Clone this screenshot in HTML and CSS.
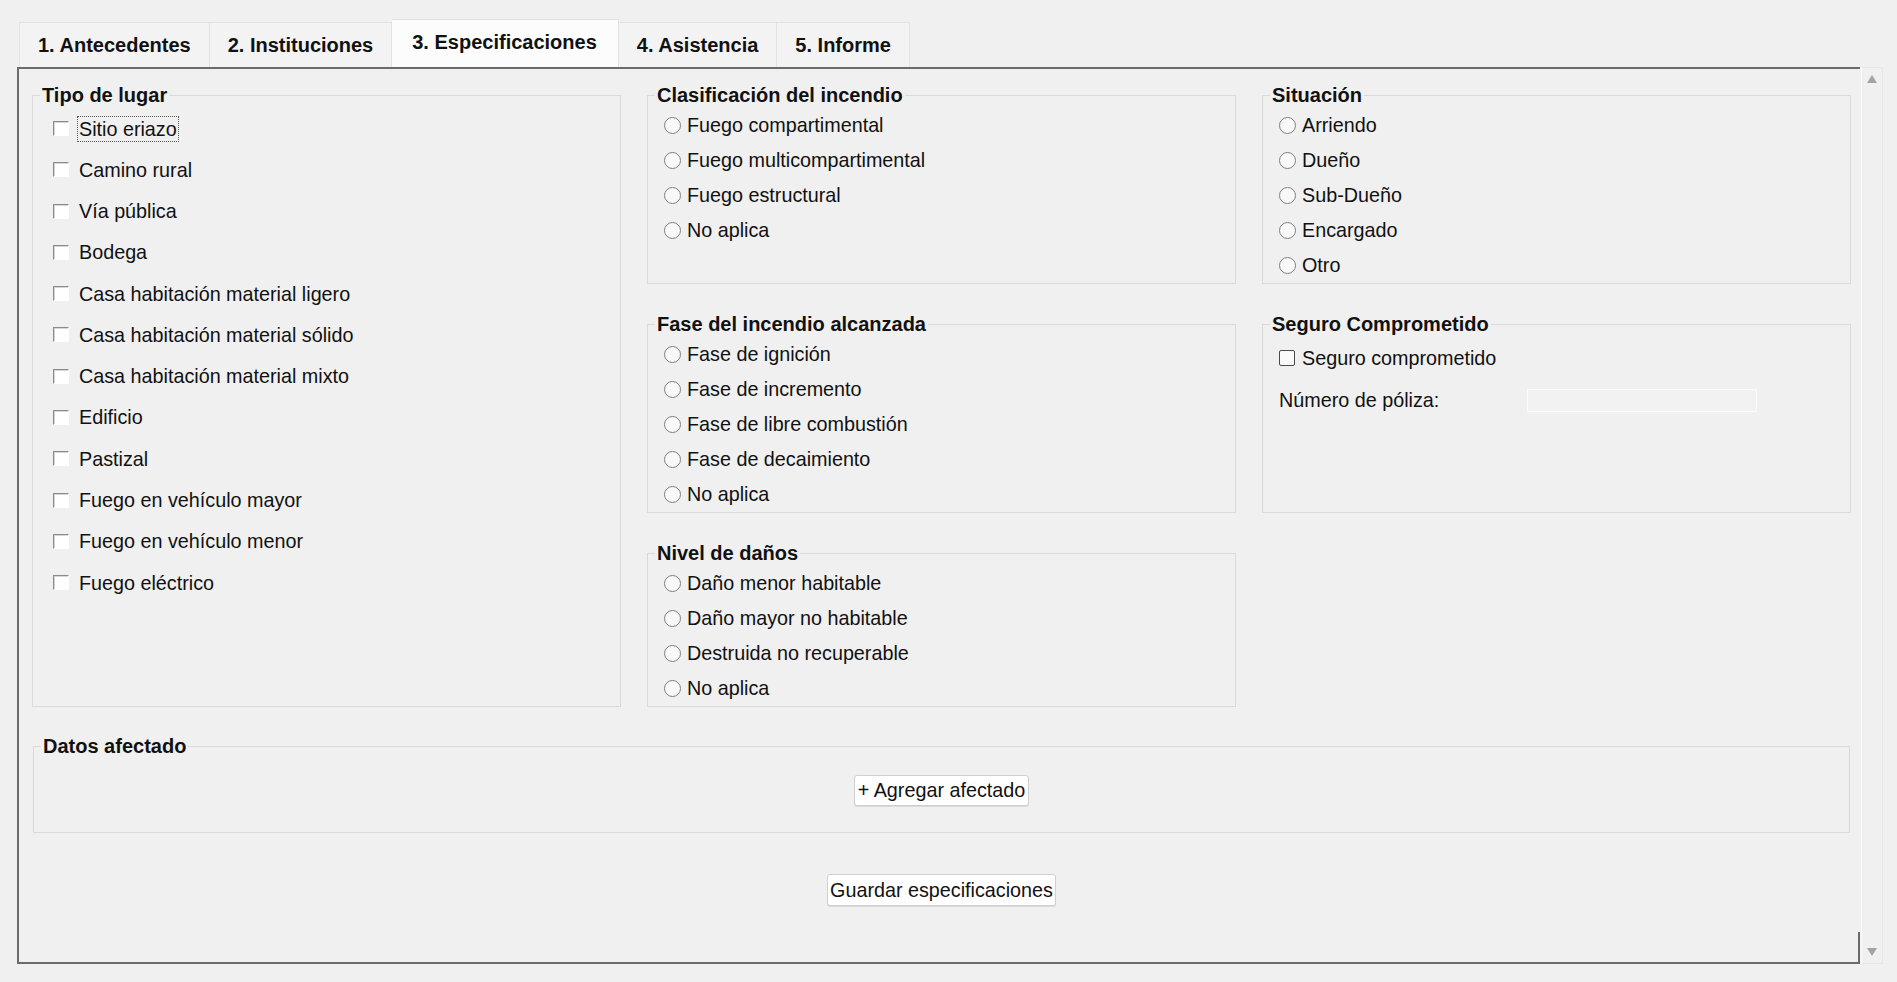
FILE: index.html
```html
<!DOCTYPE html>
<html lang="es">
<head>
    <meta charset="UTF-8">
    <meta name="viewport" content="width=device-width, initial-scale=1.0">
    <title>Especificaciones del incendio</title>
    <link rel="stylesheet" href="styles.css">
</head>
<body>

    <div class="tabs">
        <div class="tab">1. Antecedentes</div>
        <div class="tab">2. Instituciones</div>
        <div class="tab active">3. Especificaciones</div>
        <div class="tab">4. Asistencia</div>
        <div class="tab">5. Informe</div>
    </div>

    <div class="viewport">
        <div class="panel">
            <div class="grid">

                <fieldset class="group tipo">
                    <legend>Tipo de lugar</legend>
                    <div class="checks">
                        <label class="check"><input type="checkbox"><span class="focus">Sitio eriazo</span></label>
                        <label class="check"><input type="checkbox"><span>Camino rural</span></label>
                        <label class="check"><input type="checkbox"><span>Vía pública</span></label>
                        <label class="check"><input type="checkbox"><span>Bodega</span></label>
                        <label class="check"><input type="checkbox"><span>Casa habitación material ligero</span></label>
                        <label class="check"><input type="checkbox"><span>Casa habitación material sólido</span></label>
                        <label class="check"><input type="checkbox"><span>Casa habitación material mixto</span></label>
                        <label class="check"><input type="checkbox"><span>Edificio</span></label>
                        <label class="check"><input type="checkbox"><span>Pastizal</span></label>
                        <label class="check"><input type="checkbox"><span>Fuego en vehículo mayor</span></label>
                        <label class="check"><input type="checkbox"><span>Fuego en vehículo menor</span></label>
                        <label class="check"><input type="checkbox"><span>Fuego eléctrico</span></label>
                    </div>
                </fieldset>

                <fieldset class="group">
                    <legend>Clasificación del incendio</legend>
                    <div class="radios">
                        <label class="radio"><input type="radio" name="clasificacion">Fuego compartimental</label>
                        <label class="radio"><input type="radio" name="clasificacion">Fuego multicompartimental</label>
                        <label class="radio"><input type="radio" name="clasificacion">Fuego estructural</label>
                        <label class="radio"><input type="radio" name="clasificacion">No aplica</label>
                    </div>
                </fieldset>

                <fieldset class="group">
                    <legend>Situación</legend>
                    <div class="radios">
                        <label class="radio"><input type="radio" name="situacion">Arriendo</label>
                        <label class="radio"><input type="radio" name="situacion">Dueño</label>
                        <label class="radio"><input type="radio" name="situacion">Sub-Dueño</label>
                        <label class="radio"><input type="radio" name="situacion">Encargado</label>
                        <label class="radio"><input type="radio" name="situacion">Otro</label>
                    </div>
                </fieldset>

                <fieldset class="group">
                    <legend>Fase del incendio alcanzada</legend>
                    <div class="radios">
                        <label class="radio"><input type="radio" name="fase">Fase de ignición</label>
                        <label class="radio"><input type="radio" name="fase">Fase de incremento</label>
                        <label class="radio"><input type="radio" name="fase">Fase de libre combustión</label>
                        <label class="radio"><input type="radio" name="fase">Fase de decaimiento</label>
                        <label class="radio"><input type="radio" name="fase">No aplica</label>
                    </div>
                </fieldset>

                <fieldset class="group">
                    <legend>Seguro Comprometido</legend>
                    <label class="seguro-row"><input type="checkbox" class="flat">Seguro comprometido</label>
                    <div class="seguro-row poliza">
                        <label for="poliza">Número de póliza:</label>
                        <input type="text" id="poliza" disabled>
                    </div>
                </fieldset>

                <fieldset class="group">
                    <legend>Nivel de daños</legend>
                    <div class="radios">
                        <label class="radio"><input type="radio" name="danos">Daño menor habitable</label>
                        <label class="radio"><input type="radio" name="danos">Daño mayor no habitable</label>
                        <label class="radio"><input type="radio" name="danos">Destruida no recuperable</label>
                        <label class="radio"><input type="radio" name="danos">No aplica</label>
                    </div>
                </fieldset>

            </div>

            <fieldset class="group datos">
                <legend>Datos afectado</legend>
                <div class="actions">
                    <button type="button">+ Agregar afectado</button>
                </div>
            </fieldset>

            <button type="button" class="save">Guardar especificaciones</button>
        </div>

        <div class="scrollbar">
            <svg width="10" height="8" viewBox="0 0 10 8"><polygon points="5,0 10,8 0,8" fill="#a3a3a3"/></svg>
            <svg width="10" height="8" viewBox="0 0 10 8"><polygon points="0,0 10,0 5,8" fill="#a3a3a3"/></svg>
        </div>
    </div>

</body>
</html>
```

FILE: styles.css
```css
body {
    margin: 0;
    background: #f0f0f0;
    font-family: "Liberation Sans", Arial, sans-serif;
    font-size: 19.75px;
    color: #111;
}

/* tab strip */
.tabs {
    display: flex;
    align-items: flex-end;
    height: 48px;
    padding: 19px 0 0 19px;
}
.tab {
    height: 44px;
    line-height: 44px;
    padding: 0 18px;
    font-size: 20px;
    font-weight: bold;
    background: #f3f3f3;
    border: 1px solid #e2e2e2;
    border-left: none;
    border-bottom: none;
}
.tab:first-child {
    border-left: 1px solid #e2e2e2;
}
.tab.active {
    padding: 0 21px 3px 20px;
    background: #fcfcfc;
}

/* scroll pane */
.viewport {
    display: flex;
    height: 897px;
    margin: 0 14px 0 17px;
}
.panel {
    flex: 1;
    position: relative;
    box-sizing: border-box;
    border: 2px solid #6b6b6b;
    border-right: none;
    padding: 14px 9px 0 13px;
}
.panel::after {
    content: "";
    position: absolute;
    right: 0;
    bottom: -2px;
    width: 2px;
    height: 32px;
    background: #6b6b6b;
}
.scrollbar {
    width: 22px;
    margin-left: 1px;
    box-sizing: border-box;
    border: 1px solid #e6e6e6;
    border-left-color: #fbfbfb;
    padding: 7px 0;
    display: flex;
    flex-direction: column;
    justify-content: space-between;
    align-items: center;
}

/* groups */
.grid {
    display: grid;
    grid-template-columns: repeat(3, 1fr);
    column-gap: 26px;
    row-gap: 28px;
}
.tipo {
    grid-row: span 3;
}
.group {
    margin: 0;
    padding: 1px 0 0;
    min-width: 0;
    border: 1px solid #dadada;
}
.group legend {
    margin-left: 7px;
    padding: 0 2px;
    font-size: 20px;
    font-weight: bold;
    line-height: 24px;
}

.checks {
    padding-left: 20px;
}
.check {
    display: flex;
    align-items: center;
    height: 41.27px;
}
.check input {
    appearance: none;
    width: 16px;
    height: 15px;
    margin: 0 8px 0 0;
    border: 1px solid;
    border-color: #8a8a8a #fff #fff #8a8a8a;
    background: #fff;
    box-shadow: inset 1px 1px 0 #d6d6d6;
}
.check span {
    line-height: 24px;
    padding: 0 1px;
    border: 1px dotted transparent;
}
.check span.focus {
    border-color: #555;
}

.radios {
    padding-left: 16px;
}
.radio {
    display: flex;
    align-items: center;
    height: 35px;
}
.radio input {
    appearance: none;
    width: 17px;
    height: 17px;
    margin: 0 6px 0 0;
    border: 1px solid #7e7e7e;
    border-radius: 50%;
    background: #f8f8f8;
}

.seguro-row {
    display: flex;
    align-items: center;
    height: 42px;
    padding-left: 16px;
}
.seguro-row input.flat {
    appearance: none;
    width: 16px;
    height: 16px;
    margin: 0 7px 0 0;
    border: 1px solid #4a4a4a;
    border-radius: 2px;
    background: #fafafa;
}
.poliza label {
    width: 248px;
}
.poliza input {
    width: 230px;
    height: 23px;
    box-sizing: border-box;
    margin: 0;
    border: 1px solid #fbfbfb;
    background: #f2f2f2;
}

.datos {
    margin: 27px 1px 0;
    padding: 17px 0 26px;
}
.actions {
    text-align: center;
}

button {
    height: 31px;
    padding: 0 3px;
    font: inherit;
    color: #111;
    background: #fff;
    border: 1px solid #cfcfcf;
    border-radius: 3px;
    box-shadow: 0 1px 0 #dadada;
}
.save {
    display: block;
    height: 32px;
    margin: 41px auto 0;
    padding: 0 2px;
}
```
